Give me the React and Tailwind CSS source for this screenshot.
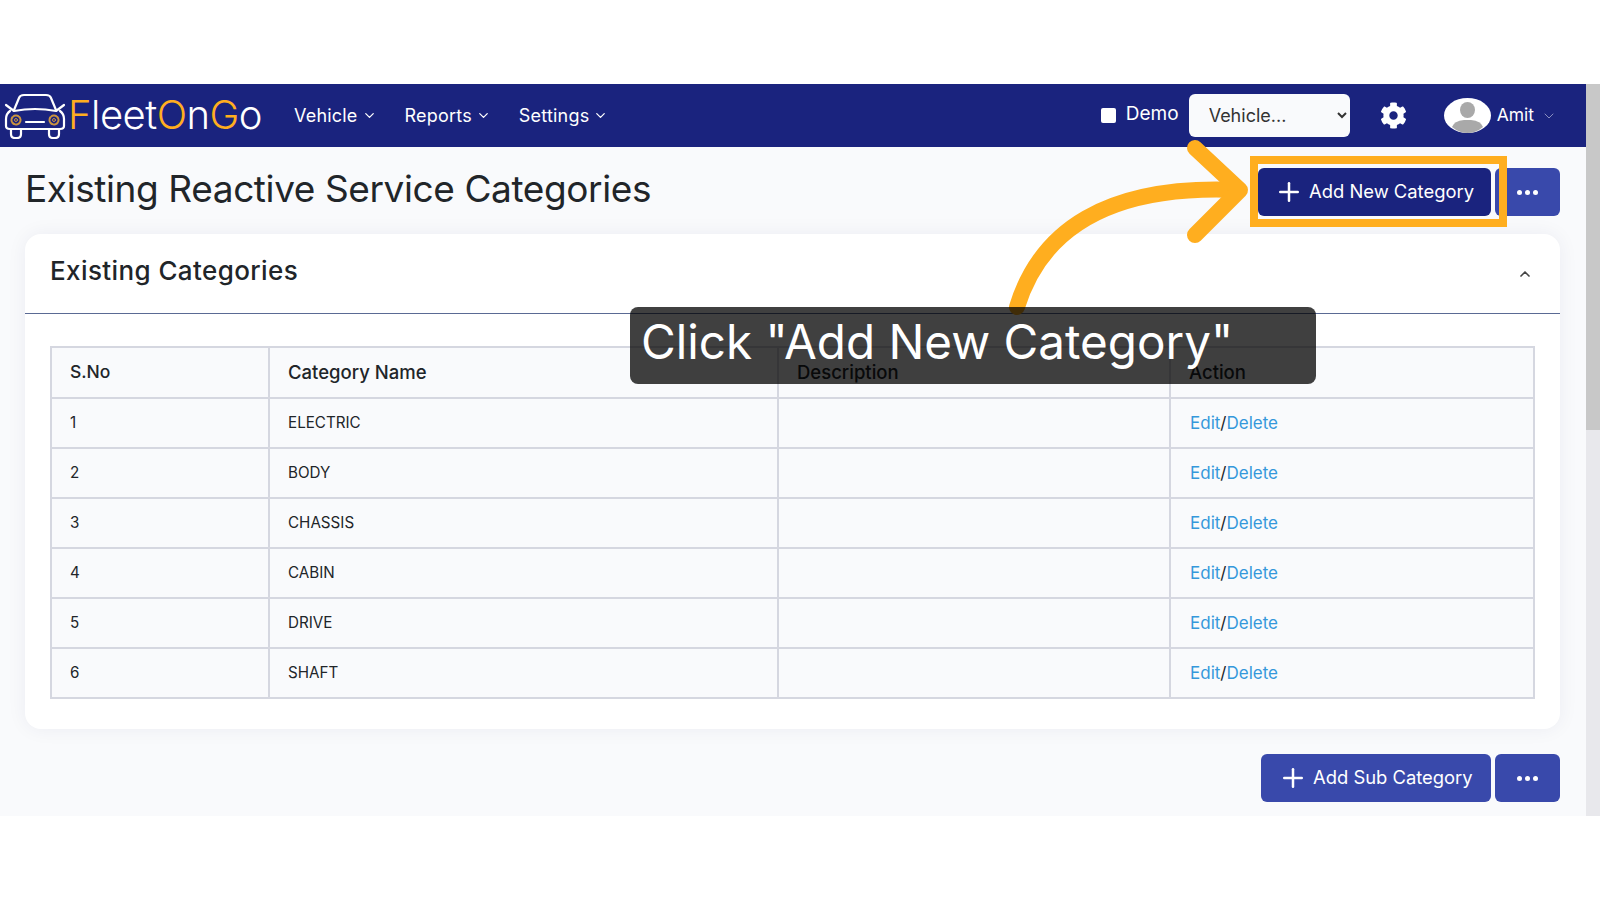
import React from "react";
import { ChevronDown, ChevronUp, Plus } from "lucide-react";
import { FaCog } from "react-icons/fa";

const rows = ["ELECTRIC", "BODY", "CHASSIS", "CABIN", "DRIVE", "SHAFT"];

function CarLogo() {
  return (
    <svg width="62" height="46" viewBox="0 0 62 46" fill="none" stroke="#fff" strokeWidth="2.2" strokeLinecap="round" strokeLinejoin="round" className="shrink-0">
      <path d="M10 17 L15 5 Q16 2 20 2 H42 Q46 2 47 5 L52 17" />
      <path d="M2 12 L10 18 Q31 14 52 18 L60 12" />
      <path d="M6 18 Q2 21 2 26 V33 Q2 36 6 36 H56 Q60 36 60 33 V26 Q60 21 56 18" />
      <path d="M22 29 H40" />
      <path d="M7 36 V41 Q7 45 11 45 H13 Q17 45 17 41 V36 M45 36 V41 Q45 45 49 45 H51 Q55 45 55 41 V36" />
      <circle cx="12" cy="27" r="4.5" stroke="#c99440" strokeWidth="2" strokeDasharray="2 1" />
      <circle cx="50" cy="27" r="4.5" stroke="#c99440" strokeWidth="2" strokeDasharray="2 1" />
      <circle cx="12" cy="27" r="1.5" stroke="#c99440" strokeWidth="1" />
      <circle cx="50" cy="27" r="1.5" stroke="#c99440" strokeWidth="1" />
    </svg>
  );
}

function Avatar() {
  return (
    <svg width="47" height="35" viewBox="0 0 47 35" className="shrink-0">
      <ellipse cx="23.5" cy="17.5" rx="23.5" ry="17.5" fill="#fff" />
      <ellipse cx="23.5" cy="12" rx="7.5" ry="8" fill="#a9a9a9" />
      <path d="M8 29 Q10 23 20 22 H27 Q37 23 39 29 Q32 35 23.5 35 Q15 35 8 29 Z" fill="#a9a9a9" />
    </svg>
  );
}

function NavItem({ label }) {
  return (
    <div className="flex items-center gap-1 pb-[1px] text-[18px] tracking-[0.2px] text-white">
      <span>{label}</span>
      <ChevronDown size={15} strokeWidth={2} />
    </div>
  );
}

function ActionBtn({ label, dark, cls }) {
  return (
    <button className={`flex h-12 items-center gap-[5px] rounded-md text-[18.4px] text-white ${cls} ${dark ? "bg-[#1a237e]" : "bg-[#3949ab]"}`}>
      <Plus size={30} strokeWidth={2} />
      <span>{label}</span>
    </button>
  );
}

function DotsBtn() {
  return (
    <button className="flex h-12 w-[65px] items-center justify-center gap-[3px] rounded-md bg-[#3949ab]">
      <span className="h-[5px] w-[5px] rounded-full bg-white" />
      <span className="h-[5px] w-[5px] rounded-full bg-white" />
      <span className="h-[5px] w-[5px] rounded-full bg-white" />
    </button>
  );
}

export default function App() {
  return (
    <div className="relative h-[900px] w-full overflow-hidden bg-white font-['Inter',sans-serif] text-[#212529]">
      <div className="h-[84px]" />
      <div className="flex h-[732px]">
        <div className="flex min-w-0 flex-1 flex-col bg-[#f9fafc]">
          <nav className="flex h-[63px] shrink-0 items-center bg-[#1a237e] pl-[4px] pr-[29px]">
            <CarLogo />
            <div className="ml-[2px] w-[226px] pb-[2px] text-[40px] font-light tracking-[-0.5px] text-white">
              <span className="text-[#ffae1f]">F</span>leet<span className="text-[#ffae1f]">O</span>n<span className="text-[#ffae1f]">G</span>o
            </div>
            <div className="flex gap-[28px]">
              <NavItem label="Vehicle" />
              <NavItem label="Reports" />
              <NavItem label="Settings" />
            </div>
            <div className="ml-auto flex items-center">
              <input type="checkbox" className="h-[15px] w-[15px] appearance-none rounded-[2px] bg-white" />
              <span className="mb-[2px] ml-[10px] text-[19px] text-white">Demo</span>
              <select defaultValue="v" className="ml-[10px] h-[43px] w-[161px] rounded-md bg-[#f9fafc] pl-[16px] text-[18px] text-[#333]">
                <option value="v">Vehicle...</option>
              </select>
              <FaCog size={27} color="#fff" className="ml-[30px]" />
              <div className="ml-[37px]"><Avatar /></div>
              <span className="ml-[6px] text-[17.5px] text-white">Amit</span>
              <ChevronDown size={16} strokeWidth={1.5} className="ml-[7px] text-[#8a8fc0]" />
            </div>
          </nav>

          <div className="flex shrink-0 items-start justify-between pl-[25px] pr-[26px] pt-[21px]">
            <h1 className="text-[37px] font-normal leading-[42px] tracking-[-0.4px] text-[#212529]">Existing Reactive Service Categories</h1>
            <div className="flex gap-1">
              <ActionBtn label="Add New Category" dark cls="w-[233px] pl-[16px]" />
              <DotsBtn />
            </div>
          </div>

          <section className="ml-[25px] mr-[26px] mt-[18px] h-[495px] shrink-0 rounded-2xl bg-white shadow-[0_0_20px_rgba(30,40,90,0.06)]">
            <div className="flex h-[80px] items-center justify-between border-b border-[#5a6a94] pl-[25px] pr-[27px]">
              <h2 className="pb-[6px] text-[26px] font-medium tracking-[0.4px] text-[#212529]">Existing Categories</h2>
              <ChevronUp size={16} strokeWidth={2.5} className="text-[#444]" />
            </div>
            <div className="px-[25px] pt-[32px]">
              <table className="w-full table-fixed border-collapse border-2 border-[#d5d7e0] bg-[#f9fafc] text-left">
                <colgroup>
                  <col className="w-[218px]" />
                  <col className="w-[509px]" />
                  <col className="w-[392px]" />
                  <col />
                </colgroup>
                <thead>
                  <tr className="h-[51px] text-[18.5px]">
                    <th className="border-2 border-[#d5d7e0] pl-[18px] text-[17.5px] font-medium">S.No</th>
                    <th className="border-2 border-[#d5d7e0] pl-[18px] font-medium">Category Name</th>
                    <th className="border-2 border-[#d5d7e0] pl-[18px] font-medium">Description</th>
                    <th className="border-2 border-[#d5d7e0] pl-[18px] font-medium">Action</th>
                  </tr>
                </thead>
                <tbody>
                  {rows.map((r, i) => (
                    <tr key={r} className="h-[50px] text-[15.2px]">
                      <td className="border-2 border-[#d5d7e0] pl-[18px]">{i + 1}</td>
                      <td className="border-2 border-[#d5d7e0] pl-[18px]">{r}</td>
                      <td className="border-2 border-[#d5d7e0] pl-[18px]"></td>
                      <td className="border-2 border-[#d5d7e0] pl-[19px] pt-[2px] text-[17px]">
                        <a className="text-[#3498db]">Edit</a>/<a className="text-[#3498db]">Delete</a>
                      </td>
                    </tr>
                  ))}
                </tbody>
              </table>
            </div>
          </section>

          <div className="flex shrink-0 justify-end gap-1 pr-[26px] pt-[25px]">
            <ActionBtn label="Add Sub Category" cls="w-[230px] pl-[17px]" />
            <DotsBtn />
          </div>
        </div>

        <div className="w-[14px] shrink-0 bg-[#e8e8ec]">
          <div className="h-[346px] bg-[#c8c8c8]" />
        </div>
      </div>

      {/* Annotation overlays */}
      <div className="absolute left-[1250px] top-[156px] h-[71px] w-[257px] border-[8px] border-[#ffae1f]" />
      <svg className="absolute left-0 top-0" width="1600" height="900" fill="none" stroke="#ffae1f" strokeWidth="16" strokeLinecap="round" strokeLinejoin="round">
        <path d="M1017 307 C1040 232 1105 184 1238 190" />
        <path d="M1195 148 L1240 190 L1195 235" />
      </svg>
      <div className="absolute left-[630px] top-[307px] flex h-[77px] w-[686px] items-center rounded-lg bg-black/75 pb-[7px] pl-[11px] text-[47.6px] text-white">
        Click "Add New Category"
      </div>
    </div>
  );
}
